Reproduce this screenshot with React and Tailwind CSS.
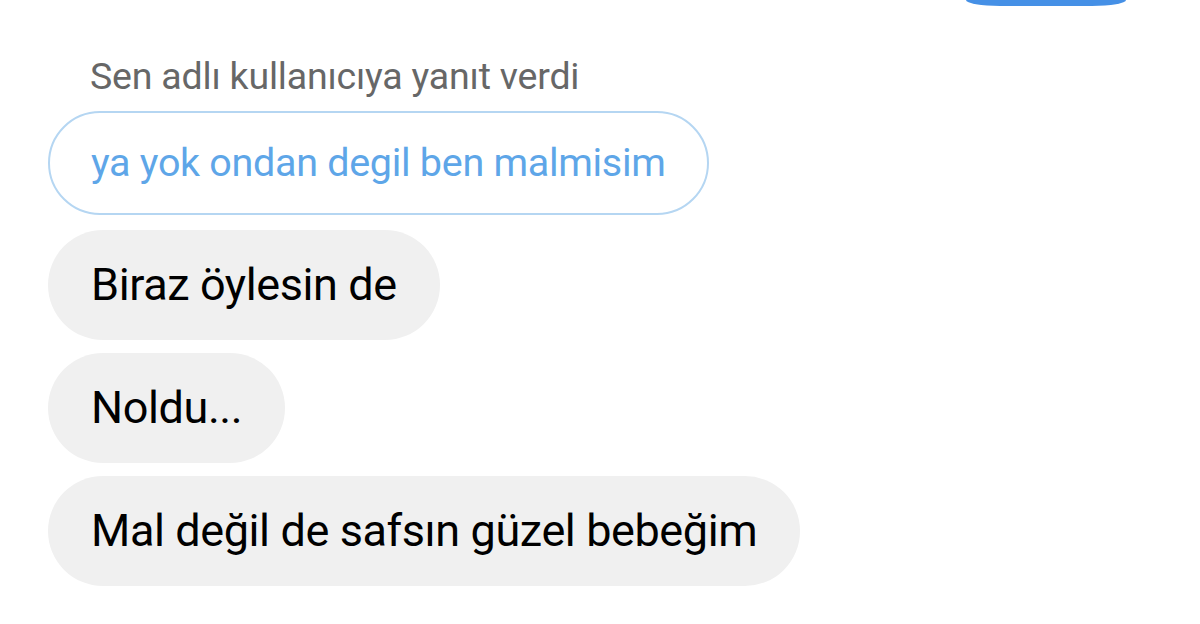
export default function App() {
  const messages = [
    "Biraz öylesin de",
    "Noldu...",
    "Mal değil de safsın güzel bebeğim",
  ];

  return (
    <div className="w-[1200px] h-[624px] bg-white overflow-hidden font-['Roboto',sans-serif]">
      {/* own message tail from previous row */}
      <div className="flex justify-end pr-[74px]">
        <div className="w-[160px] h-[6px] bg-[#4590e6] rounded-bl-[34px_6px] rounded-br-[34px_6px]" />
      </div>

      <div className="flex flex-col items-start pl-[48px] pt-[50px]">
        <p className="pl-[42px] text-[37.5px] leading-[40px] text-[#676767] tracking-[-0.2px]">
          Sen adlı kullanıcıya yanıt verdi
        </p>

        <div className="mt-[15px] h-[104px] flex items-center px-[41px] rounded-full border-2 border-[#b5d6f2]">
          <span className="text-[39.5px] text-[#5ea6e8] tracking-[-0.3px]">
            ya yok ondan degil ben malmisim
          </span>
        </div>

        <div className="flex flex-col items-start gap-[13px] mt-[15px]">
          {messages.map((msg) => (
            <div
              key={msg}
              className="h-[110px] flex items-center px-[43px] rounded-full bg-[#f0f0f0]"
            >
              <span className="text-[45px] text-black tracking-[-0.4px]">
                {msg}
              </span>
            </div>
          ))}
        </div>
      </div>
    </div>
  );
}
